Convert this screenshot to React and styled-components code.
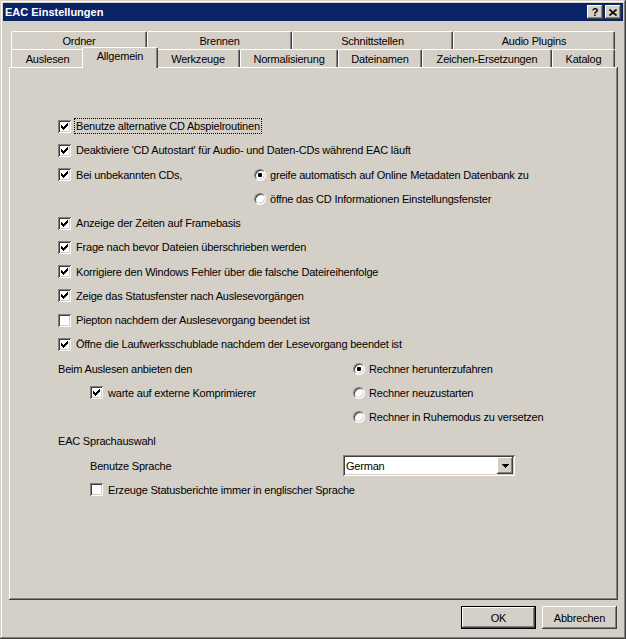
import React from "react";
import styled, { createGlobalStyle } from "styled-components";

const Global = createGlobalStyle`
  html, body { margin: 0; padding: 0; background: #d4d0c8; }
  body {
    font-family: "Liberation Sans", Arial, sans-serif;
    font-size: 11px;
    letter-spacing: -0.2px;
    color: #000;
  }
  * { box-sizing: border-box; }
`;

const raised = `
  box-shadow: inset -1px -1px #404040, inset 1px 1px #ffffff,
    inset -2px -2px #808080, inset 2px 2px #d4d0c8;
`;
const sunken = `
  box-shadow: inset 1px 1px #808080, inset -1px -1px #ffffff,
    inset 2px 2px #404040, inset -2px -2px #d4d0c8;
`;

const Window = styled.div`
  width: 626px;
  height: 639px;
  padding: 3px;
  background: #d4d0c8;
  display: flex;
  flex-direction: column;
  box-shadow: inset -1px -1px #404040, inset 1px 1px #d4d0c8,
    inset -2px -2px #808080, inset 2px 2px #ffffff;
`;

const TitleBar = styled.div`
  height: 18px;
  background: #0a246a;
  display: flex;
  align-items: center;
  padding: 0 2px 0 2px;
`;

const Title = styled.div`
  flex: 1;
  color: #fff;
  font-weight: bold;
  font-size: 11px;
  letter-spacing: 0;
  padding-left: 0px;
`;

const CaptionButton = styled.div`
  width: 16px;
  height: 14px;
  background: #d4d0c8;
  ${raised}
  display: flex;
  align-items: center;
  justify-content: center;
  margin-left: ${(p) => p.$gap || 0}px;
  font-weight: bold;
  font-size: 11px;
  letter-spacing: 0;
  line-height: 14px;
  color: #000;
`;

const TabArea = styled.div`
  margin-top: 10px;
  padding-left: 8px;
  display: flex;
  flex-direction: column;
`;

const TabRow = styled.div`
  display: flex;
  height: 18px;
`;

const Tab = styled.div`
  position: relative;
  width: ${(p) => p.$w}px;
  height: ${(p) => (p.$sel ? 21 : 18)}px;
  margin: ${(p) => (p.$sel ? "-2px -2px 0 -2px" : "0")};
  z-index: ${(p) => (p.$sel ? 2 : 1)};
  background: #d4d0c8;
  border-top: 1px solid #ffffff;
  border-left: 1px solid #ffffff;
  border-right: 1px solid #404040;
  border-radius: 2px 2px 0 0;
  box-shadow: inset -1px 0 #808080;
  text-align: center;
  line-height: 17px;
  padding-top: ${(p) => (p.$sel ? 0 : 1)}px;
  white-space: nowrap;
`;

const Panel = styled.div`
  margin: 0 5px 0 6px;
  height: 533px;
  background: #d4d0c8;
  box-shadow: inset -1px -1px #404040, inset 1px 1px #ffffff,
    inset -2px -2px #808080;
  padding: 47px 0 0 49px;
  display: flex;
  flex-direction: column;
`;

const Row = styled.div`
  height: 24.25px;
  display: grid;
  grid-template-columns: ${(p) => p.$col || 560}px 1fr;
  align-items: center;
`;

const Cell = styled.div`
  display: flex;
  align-items: center;
  padding-left: ${(p) => p.$indent || 0}px;
  white-space: nowrap;
`;

const Box = styled.div`
  width: 13px;
  height: 13px;
  flex: none;
  background: #fff;
  ${sunken}
  display: flex;
  align-items: center;
  justify-content: center;
`;

const Label = styled.span`
  margin-left: 3px;
  padding: 0 1px;
  line-height: 14px;
  border: 1px dotted ${(p) => (p.$focus ? "#000" : "transparent")};
`;

const Radio = styled.div`
  width: 12px;
  height: 12px;
  flex: none;
  border-radius: 50%;
  background: #fff;
  border: 1px solid;
  border-color: #808080 #ffffff #ffffff #808080;
  box-shadow: inset 1px 1px #404040, inset -1px -1px #d4d0c8;
  display: flex;
  align-items: center;
  justify-content: center;
`;

const Dot = styled.div`
  width: 4px;
  height: 4px;
  border-radius: 1px;
  background: #000;
`;

const RadioLabel = styled.span`
  margin-left: 4px;
`;

const Select = styled.div`
  width: 172px;
  height: 21px;
  background: #fff;
  ${sunken}
  padding: 2px;
  display: flex;
  align-items: center;
`;

const SelectValue = styled.div`
  flex: 1;
  padding-left: 1px;
`;

const DropButton = styled.div`
  width: 16px;
  height: 17px;
  background: #d4d0c8;
  ${raised}
  display: flex;
  align-items: center;
  justify-content: center;
`;

const ButtonBar = styled.div`
  margin-top: 6px;
  padding-right: 6px;
  display: flex;
  justify-content: flex-end;
  gap: 6px;
`;

const Button = styled.div`
  width: 75px;
  height: 23px;
  background: #d4d0c8;
  display: flex;
  align-items: center;
  justify-content: center;
  ${(p) =>
    p.$default
      ? `border: 1px solid #000; box-shadow: inset -1px -1px #404040, inset 1px 1px #ffffff, inset -2px -2px #808080;`
      : raised}
`;

const Check = () => (
  <svg width="7" height="7" viewBox="0 0 7 7" shapeRendering="crispEdges">
    {[2, 3, 4, 3, 2, 1, 0].map((y, x) => (
      <rect key={x} x={x} y={y} width="1" height="3" fill="#000" />
    ))}
  </svg>
);

const CheckBox = ({ checked, children, focus }) => (
  <>
    <Box>{checked && <Check />}</Box>
    <Label $focus={focus}>{children}</Label>
  </>
);

const RadioItem = ({ checked, children }) => (
  <>
    <Radio>{checked && <Dot />}</Radio>
    <RadioLabel>{children}</RadioLabel>
  </>
);

const row1 = [
  { label: "Ordner", w: 136 },
  { label: "Brennen", w: 145 },
  { label: "Schnittstellen", w: 161 },
  { label: "Audio Plugins", w: 162 },
];
const row2 = [
  { label: "Auslesen", w: 73 },
  { label: "Allgemein", w: 72, sel: true },
  { label: "Werkzeuge", w: 84 },
  { label: "Normalisierung", w: 98 },
  { label: "Dateinamen", w: 84 },
  { label: "Zeichen-Ersetzungen", w: 130 },
  { label: "Katalog", w: 63 },
];

export default function App() {
  return (
    <>
      <Global />
      <Window>
        <TitleBar>
          <Title>EAC Einstellungen</Title>
          <CaptionButton>?</CaptionButton>
          <CaptionButton $gap={2}>
            <svg width="8" height="7" viewBox="0 0 8 7">
              <path d="M0.5 0.5 L7.5 6.5 M7.5 0.5 L0.5 6.5" stroke="#000" strokeWidth="1.6" />
            </svg>
          </CaptionButton>
        </TitleBar>
        <TabArea>
          <TabRow>
            {row1.map((t) => (
              <Tab key={t.label} $w={t.w}>{t.label}</Tab>
            ))}
          </TabRow>
          <TabRow>
            {row2.map((t) => (
              <Tab key={t.label} $w={t.sel ? t.w + 4 : t.w} $sel={t.sel}>
                {t.label}
              </Tab>
            ))}
          </TabRow>
        </TabArea>
        <Panel>
          <Row>
            <Cell><CheckBox checked focus>Benutze alternative CD Abspielroutinen</CheckBox></Cell>
          </Row>
          <Row>
            <Cell><CheckBox checked>Deaktiviere 'CD Autostart' für Audio- und Daten-CDs während EAC läuft</CheckBox></Cell>
          </Row>
          <Row $col={196}>
            <Cell><CheckBox checked>Bei unbekannten CDs,</CheckBox></Cell>
            <Cell><RadioItem checked>greife automatisch auf Online Metadaten Datenbank zu</RadioItem></Cell>
          </Row>
          <Row $col={196}>
            <Cell />
            <Cell><RadioItem>öffne das CD Informationen Einstellungsfenster</RadioItem></Cell>
          </Row>
          <Row>
            <Cell><CheckBox checked>Anzeige der Zeiten auf Framebasis</CheckBox></Cell>
          </Row>
          <Row>
            <Cell><CheckBox checked>Frage nach bevor Dateien überschrieben werden</CheckBox></Cell>
          </Row>
          <Row>
            <Cell><CheckBox checked>Korrigiere den Windows Fehler über die falsche Dateireihenfolge</CheckBox></Cell>
          </Row>
          <Row>
            <Cell><CheckBox checked>Zeige das Statusfenster nach Auslesevorgängen</CheckBox></Cell>
          </Row>
          <Row>
            <Cell><CheckBox>Piepton nachdem der Auslesevorgang beendet ist</CheckBox></Cell>
          </Row>
          <Row>
            <Cell><CheckBox checked>Öffne die Laufwerksschublade nachdem der Lesevorgang beendet ist</CheckBox></Cell>
          </Row>
          <Row $col={295}>
            <Cell>Beim Auslesen anbieten den</Cell>
            <Cell><RadioItem checked>Rechner herunterzufahren</RadioItem></Cell>
          </Row>
          <Row $col={295}>
            <Cell $indent={32}><CheckBox checked>warte auf externe Komprimierer</CheckBox></Cell>
            <Cell><RadioItem>Rechner neuzustarten</RadioItem></Cell>
          </Row>
          <Row $col={295}>
            <Cell />
            <Cell><RadioItem>Rechner in Ruhemodus zu versetzen</RadioItem></Cell>
          </Row>
          <Row>
            <Cell>EAC Sprachauswahl</Cell>
          </Row>
          <Row $col={285}>
            <Cell $indent={32}>Benutze Sprache</Cell>
            <Cell>
              <Select>
                <SelectValue>German</SelectValue>
                <DropButton>
                  <svg width="7" height="4" viewBox="0 0 7 4" shapeRendering="crispEdges">
                    <path d="M0 0H7V1H6V2H5V3H4V4H3V3H2V2H1V1H0Z" fill="#000" />
                  </svg>
                </DropButton>
              </Select>
            </Cell>
          </Row>
          <Row>
            <Cell $indent={32}><CheckBox>Erzeuge Statusberichte immer in englischer Sprache</CheckBox></Cell>
          </Row>
        </Panel>
        <ButtonBar>
          <Button $default>OK</Button>
          <Button>Abbrechen</Button>
        </ButtonBar>
      </Window>
    </>
  );
}
